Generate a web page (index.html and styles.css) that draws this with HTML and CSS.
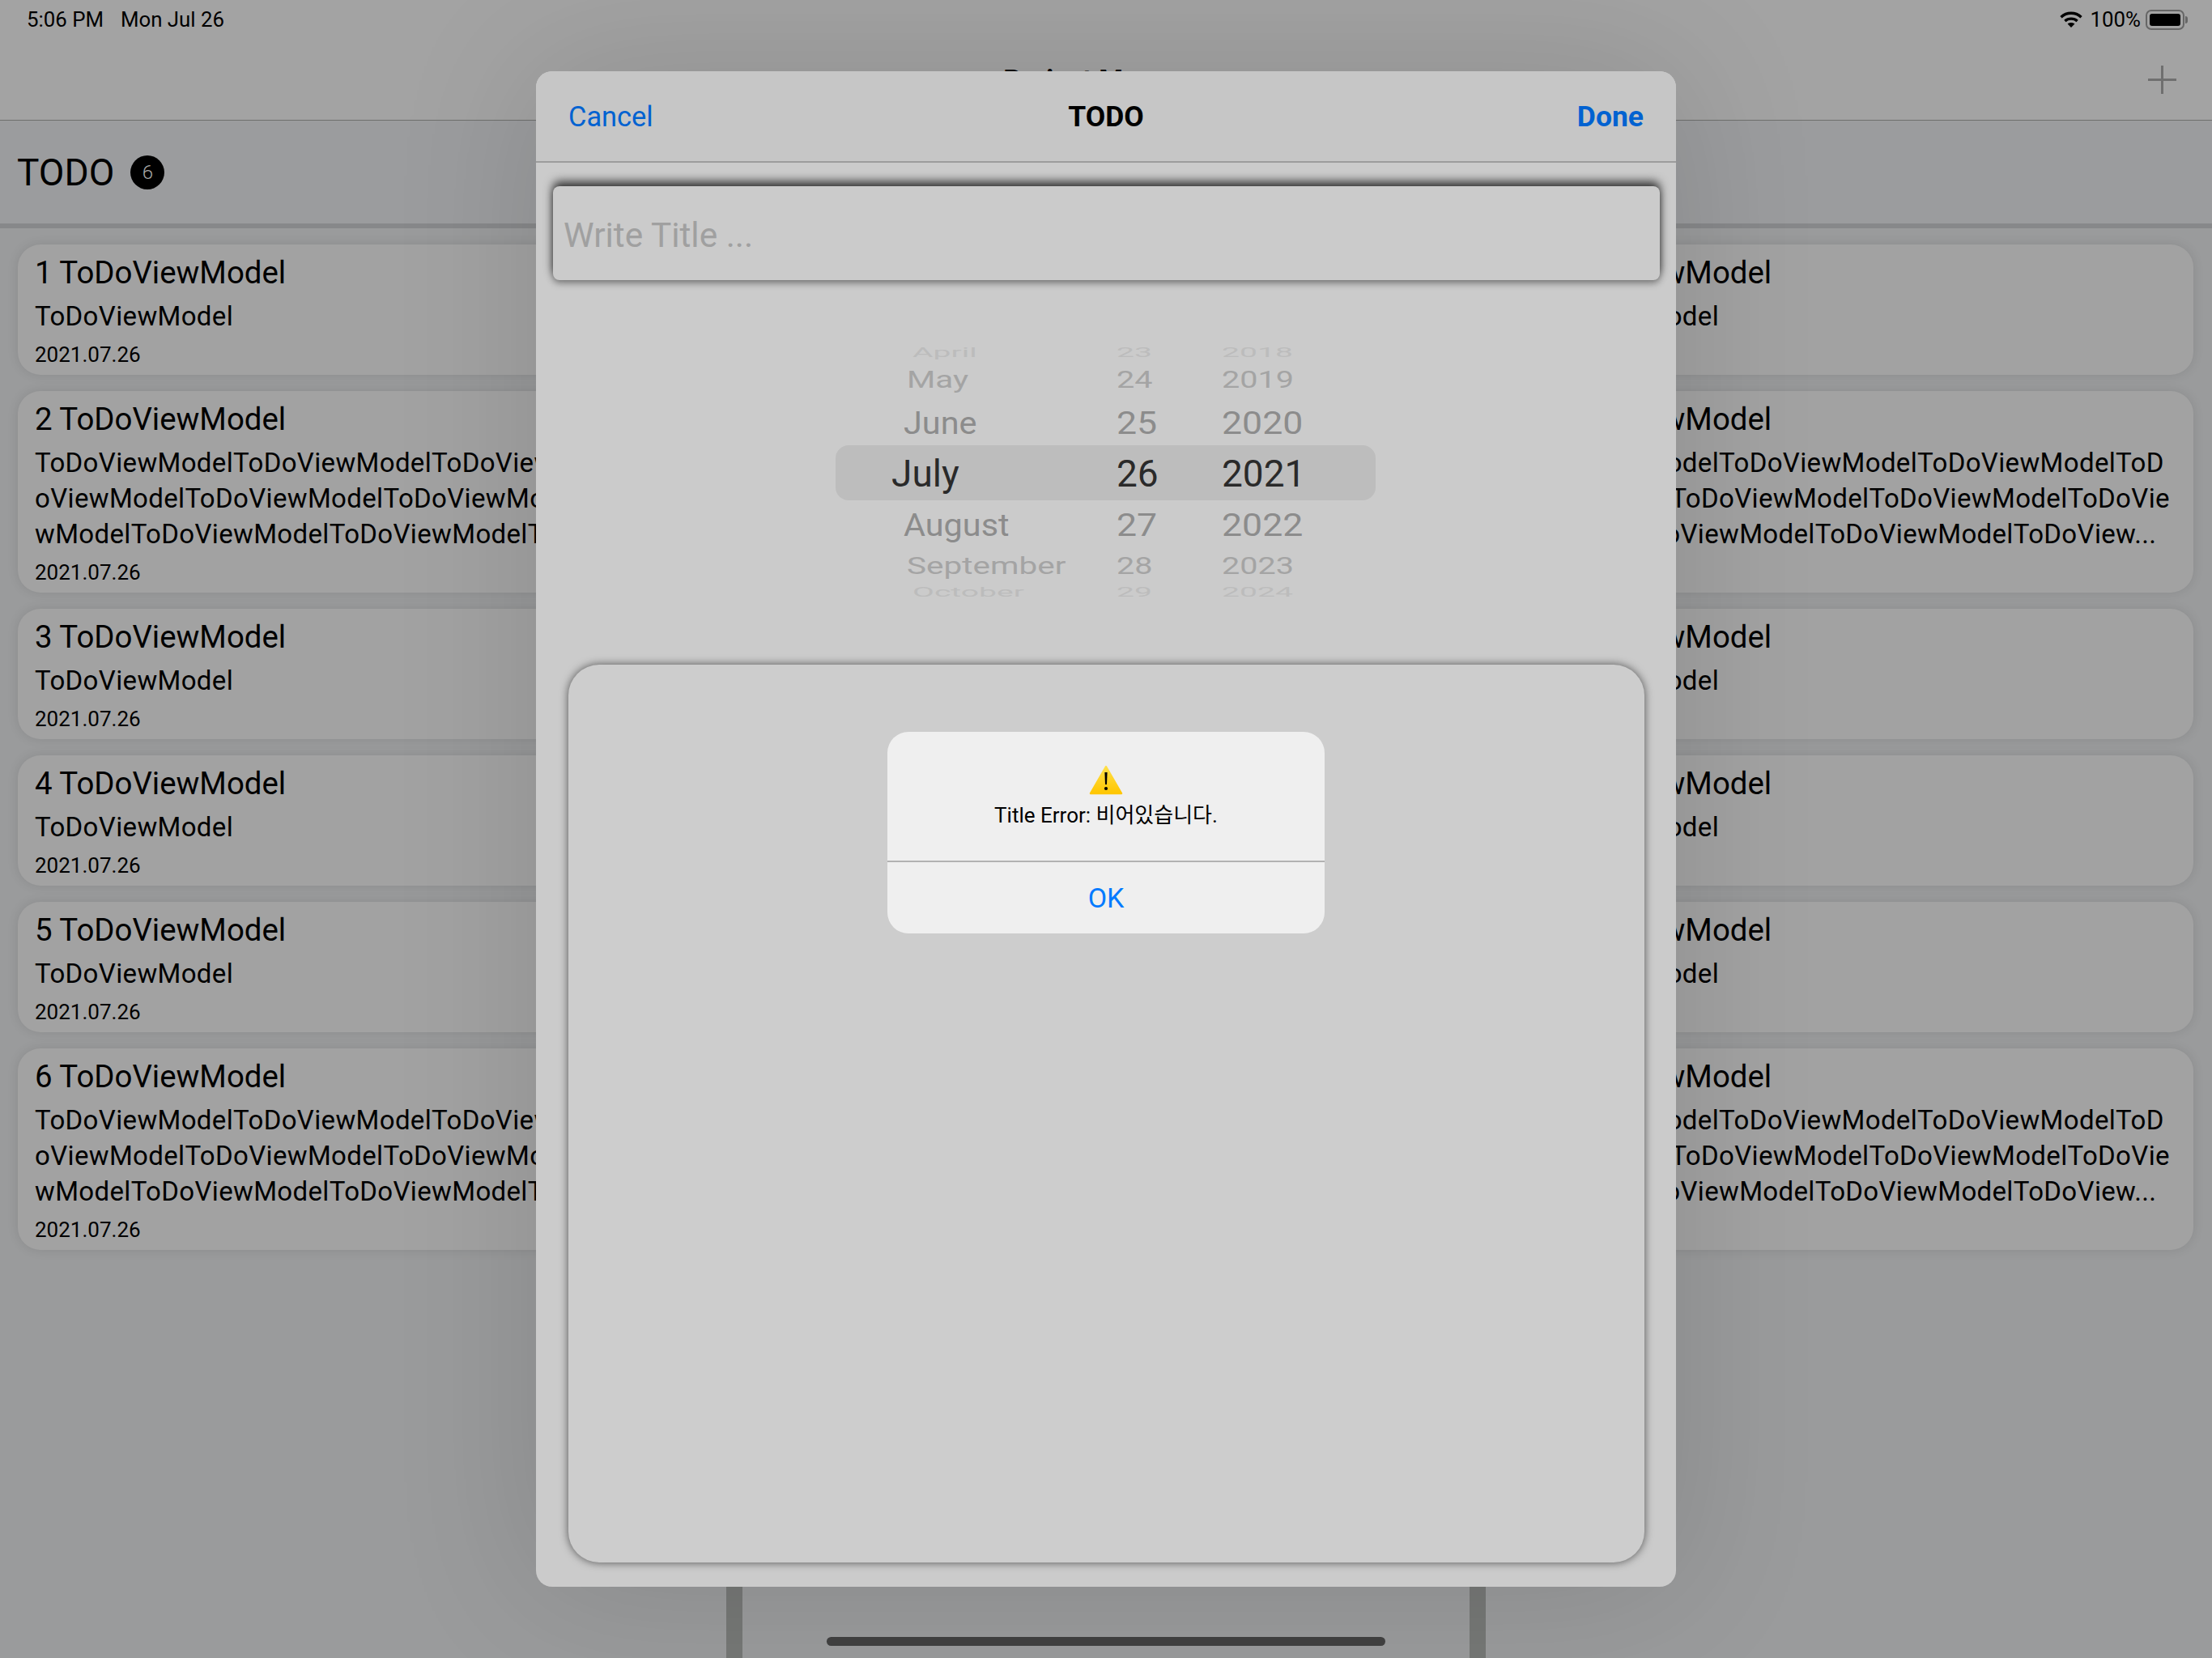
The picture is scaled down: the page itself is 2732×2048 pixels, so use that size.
FILE: index.html
```html
<!DOCTYPE html>
<html lang="en">
<head>
    <meta charset="UTF-8">
    <meta name="viewport" content="width=device-width, initial-scale=1.0">
    <title>Project Manager</title>
    <link rel="stylesheet" href="styles.css">
</head>
<body>
    <div class="app">
        <div class="status-bar">
            <div class="status-left">
                <span>5:06 PM</span>
                <span>Mon Jul 26</span>
            </div>
            <div class="status-right">
                <svg class="wifi" width="28" height="20" viewBox="0 0 28 20">
                    <path d="M1.5 7.2C8.5 .6 19.5 .6 26.5 7.2" fill="none" stroke="#000" stroke-width="3.4"/>
                    <path d="M6.4 12C10.6 8.2 17.4 8.2 21.6 12" fill="none" stroke="#000" stroke-width="3.4"/>
                    <path d="M14 20L9.6 15.4C12 13.4 16 13.4 18.4 15.4Z" fill="#000"/>
                </svg>
                <span>100%</span>
                <div class="battery">
                    <div class="battery-fill"></div>
                </div>
                <div class="battery-nub"></div>
            </div>
        </div>

        <div class="nav">
            <span></span>
            <div class="nav-title">Project Manager</div>
            <svg class="nav-add" width="35" height="35" viewBox="0 0 35 35">
                <path d="M17.5 0V35M0 17.5H35" stroke="#6f6f6f" stroke-width="3"/>
            </svg>
        </div>

        <div class="board">
            <div class="column">
                <div class="board-header">
                    <span class="board-title">TODO</span>
                    <span class="board-count">6</span>
                </div>
                <div class="card-list">
                    <div class="card">
                        <div class="card-title">1 ToDoViewModel</div>
                        <div class="card-line">ToDoViewModel</div>
                        <div class="card-date">2021.07.26</div>
                    </div>
                    <div class="card">
                        <div class="card-title">2 ToDoViewModel</div>
                        <div class="card-line">ToDoViewModelToDoViewModelToDoViewModelToD</div>
                        <div class="card-line">oViewModelToDoViewModelToDoViewModelToDoVie</div>
                        <div class="card-line">wModelToDoViewModelToDoViewModelToDoView...</div>
                        <div class="card-date">2021.07.26</div>
                    </div>
                    <div class="card">
                        <div class="card-title">3 ToDoViewModel</div>
                        <div class="card-line">ToDoViewModel</div>
                        <div class="card-date">2021.07.26</div>
                    </div>
                    <div class="card">
                        <div class="card-title">4 ToDoViewModel</div>
                        <div class="card-line">ToDoViewModel</div>
                        <div class="card-date">2021.07.26</div>
                    </div>
                    <div class="card">
                        <div class="card-title">5 ToDoViewModel</div>
                        <div class="card-line">ToDoViewModel</div>
                        <div class="card-date">2021.07.26</div>
                    </div>
                    <div class="card">
                        <div class="card-title">6 ToDoViewModel</div>
                        <div class="card-line">ToDoViewModelToDoViewModelToDoViewModelToD</div>
                        <div class="card-line">oViewModelToDoViewModelToDoViewModelToDoVie</div>
                        <div class="card-line">wModelToDoViewModelToDoViewModelToDoView...</div>
                        <div class="card-date">2021.07.26</div>
                    </div>
                </div>
            </div>

            <div class="column">
                <div class="board-header"></div>
            </div>

            <div class="column">
                <div class="board-header"></div>
                <div class="card-list">
                    <div class="card">
                        <div class="card-title">1 ToDoViewModel</div>
                        <div class="card-line">ToDoViewModel</div>
                        <div class="card-date">2021.07.26</div>
                    </div>
                    <div class="card">
                        <div class="card-title">2 ToDoViewModel</div>
                        <div class="card-line">ToDoViewModelToDoViewModelToDoViewModelToD</div>
                        <div class="card-line">oViewModelToDoViewModelToDoViewModelToDoVie</div>
                        <div class="card-line">wModelToDoViewModelToDoViewModelToDoView...</div>
                        <div class="card-date">2021.07.26</div>
                    </div>
                    <div class="card">
                        <div class="card-title">3 ToDoViewModel</div>
                        <div class="card-line">ToDoViewModel</div>
                        <div class="card-date">2021.07.26</div>
                    </div>
                    <div class="card">
                        <div class="card-title">4 ToDoViewModel</div>
                        <div class="card-line">ToDoViewModel</div>
                        <div class="card-date">2021.07.26</div>
                    </div>
                    <div class="card">
                        <div class="card-title">5 ToDoViewModel</div>
                        <div class="card-line">ToDoViewModel</div>
                        <div class="card-date">2021.07.26</div>
                    </div>
                    <div class="card">
                        <div class="card-title">6 ToDoViewModel</div>
                        <div class="card-line">ToDoViewModelToDoViewModelToDoViewModelToD</div>
                        <div class="card-line">oViewModelToDoViewModelToDoViewModelToDoVie</div>
                        <div class="card-line">wModelToDoViewModelToDoViewModelToDoView...</div>
                        <div class="card-date">2021.07.26</div>
                    </div>
                </div>
            </div>
        </div>
    </div>

    <div class="home-indicator"></div>

    <div class="modal">
        <div class="modal-nav">
            <span class="modal-cancel">Cancel</span>
            <span class="modal-title">TODO</span>
            <span class="modal-done">Done</span>
        </div>

        <div class="title-field">Write Title ...</div>

        <div class="picker">
            <div class="picker-band"></div>
            <div class="picker-grid">
                <span class="cell month r3">April</span><span class="cell day r3">23</span><span class="cell year r3">2018</span>
                <span class="cell month r2">May</span><span class="cell day r2">24</span><span class="cell year r2">2019</span>
                <span class="cell month r1">June</span><span class="cell day r1">25</span><span class="cell year r1">2020</span>
                <span class="cell month r0">July</span><span class="cell day r0">26</span><span class="cell year r0">2021</span>
                <span class="cell month r1">August</span><span class="cell day r1">27</span><span class="cell year r1">2022</span>
                <span class="cell month r2">September</span><span class="cell day r2">28</span><span class="cell year r2">2023</span>
                <span class="cell month r3">October</span><span class="cell day r3">29</span><span class="cell year r3">2024</span>
            </div>
        </div>

        <div class="panel"></div>
    </div>

    <div class="alert">
        <div class="alert-body">
            <svg class="alert-icon" width="42" height="37" viewBox="0 0 42 37">
                <defs>
                    <linearGradient id="warn" x1="0" y1="0" x2="0" y2="1">
                        <stop offset="0" stop-color="#ffe04a"/>
                        <stop offset="1" stop-color="#ffc600"/>
                    </linearGradient>
                </defs>
                <path d="M21 2L40 35H2Z" fill="url(#warn)" stroke="url(#warn)" stroke-width="2.5" stroke-linejoin="round"/>
                <path d="M19.4 9H22.6L22 24H20Z" fill="#000"/>
                <circle cx="21" cy="29" r="2.1" fill="#000"/>
            </svg>
            <div class="alert-text">Title Error: 비어있습니다.</div>
        </div>
        <div class="alert-ok">OK</div>
    </div>
</body>
</html>
```

FILE: styles.css
```css
* {
    box-sizing: border-box;
}

body {
    margin: 0;
    width: 2732px;
    height: 2048px;
    position: relative;
    overflow: hidden;
    background-color: #9a9b9c;
    font-family: Roboto, "Noto Sans CJK KR", sans-serif;
    color: #000;
}

.app {
    display: flex;
    flex-direction: column;
    height: 2048px;
}

/* status bar */
.status-bar {
    display: flex;
    justify-content: space-between;
    align-items: center;
    height: 48px;
    padding: 0 30px 0 33px;
    background-color: #a3a3a3;
    font-size: 25.8px;
}

.status-left {
    display: flex;
    gap: 21px;
}

.status-right {
    display: flex;
    align-items: center;
}

.wifi {
    margin-right: 10px;
}

.battery {
    width: 48px;
    height: 25px;
    margin-left: 6px;
    padding: 3px;
    border: 2px solid #666;
    border-radius: 7px;
}

.battery-fill {
    height: 100%;
    border-radius: 3px;
    background-color: #000;
}

.battery-nub {
    width: 3px;
    height: 9px;
    margin-left: 1px;
    border-radius: 0 3px 3px 0;
    background-color: #666;
}

/* nav */
.nav {
    display: grid;
    grid-template-columns: 1fr auto 1fr;
    align-items: center;
    height: 101px;
    padding: 0 44px;
    background-color: #a3a3a3;
    border-bottom: 1px solid #6f706e;
}

.nav-title {
    font-size: 34px;
    font-weight: 700;
}

.nav-add {
    justify-self: end;
}

/* board */
.board {
    flex: 1;
    display: grid;
    grid-template-columns: 897px 918px 917px;
}

.column + .column {
    border-left: 20px solid #767876;
}

.board-header {
    display: flex;
    align-items: center;
    gap: 20px;
    height: 133px;
    padding-left: 21px;
    background-color: #9b9c9e;
    border-bottom: 6px solid #87888a;
}

.board-title {
    font-size: 46px;
}

.board-count {
    display: flex;
    align-items: center;
    justify-content: center;
    width: 42px;
    height: 42px;
    border-radius: 50%;
    background-color: #000;
    color: #a8a8a8;
    font-size: 24px;
    font-weight: 300;
}

.card-list {
    display: flex;
    flex-direction: column;
    gap: 20px;
    padding: 20px 23px 0 22px;
}

.card {
    padding: 15px 21px 10px;
    border-radius: 28px;
    background-color: #a2a2a2;
    box-shadow: 0 0 14px rgba(0, 0, 0, 0.1);
}

.card-title {
    height: 40px;
    margin-bottom: 12px;
    font-size: 38.4px;
    line-height: 40px;
}

.card-line {
    height: 44px;
    font-size: 33px;
    letter-spacing: 0.35px;
    line-height: 44px;
    white-space: nowrap;
}

.card-date {
    height: 30px;
    margin-top: 10px;
    font-size: 26px;
    line-height: 30px;
}

.home-indicator {
    position: absolute;
    left: 1021px;
    top: 2022px;
    width: 690px;
    height: 11px;
    border-radius: 6px;
    background-color: #414141;
}

/* modal sheet */
.modal {
    position: absolute;
    left: 662px;
    top: 88px;
    width: 1408px;
    height: 1872px;
    display: flex;
    flex-direction: column;
    border-radius: 20px;
    background-color: #cbcbcb;
    box-shadow: 0 0 180px rgba(0, 0, 0, 0.13);
}

.modal-nav {
    display: grid;
    grid-template-columns: 1fr auto 1fr;
    align-items: center;
    height: 113px;
    padding: 0 40px;
    border-radius: 20px 20px 0 0;
    border-bottom: 2px solid #9d9d9d;
    background-color: #c6c6c6;
    font-size: 34.4px;
    color: #0062d1;
}

.modal-title {
    font-size: 35.5px;
    font-weight: 700;
    color: #000;
}

.modal-done {
    justify-self: end;
    font-size: 35.5px;
    font-weight: 700;
}

.title-field {
    height: 116px;
    margin: 29px 20px 0 21px;
    padding-left: 13px;
    border-radius: 8px;
    background-color: #cbcbcb;
    box-shadow: 0 -6px 12px rgba(0, 0, 0, 0.72), 0 4px 8px rgba(0, 0, 0, 0.35);
    font-size: 42.4px;
    line-height: 121px;
    color: #a0a0a0;
}

.picker {
    position: relative;
    height: 322px;
    margin-top: 78px;
}

.picker-band {
    position: absolute;
    left: 370px;
    top: 126px;
    width: 667px;
    height: 68px;
    border-radius: 16px;
    background-color: #bdbdbd;
}

.picker-grid {
    position: relative;
    display: grid;
    grid-template-columns: 278px 130px 200px;
    grid-template-rows: 24px 42px 64px 62px 64px 38px 28px;
    margin-left: 439px;
}

.cell {
    font-size: 46px;
    transform-origin: left center;
    align-self: center;
    justify-self: start;
    line-height: 1;
}

.r0 {
    color: #2a2a2a;
}

.r1 {
    color: #8c8c8c;
    transform: scale(0.97, 0.85);
}

.r2 {
    color: #a4a4a4;
    transform: scale(0.86, 0.63);
}

.r3 {
    color: #bcbcbc;
    transform: scale(0.85, 0.34);
}

.month.r1 {
    margin-left: 15px;
    transform: scale(0.9, 0.85);
}

.month.r2 {
    margin-left: 19px;
    transform: scale(0.88, 0.63);
}

.month.r3 {
    margin-left: 26px;
}

.panel {
    flex: 1;
    margin: 75px 39px 30px 40px;
    border-radius: 38px;
    background-color: #cdcdcd;
    box-shadow: 0 0 11px rgba(0, 0, 0, 0.6);
}

/* alert */
.alert {
    position: absolute;
    left: 1096px;
    top: 904px;
    width: 540px;
    height: 249px;
    display: flex;
    flex-direction: column;
    border-radius: 26px;
    background-color: #efefef;
}

.alert-body {
    display: flex;
    flex-direction: column;
    align-items: center;
    height: 161px;
    padding-top: 41px;
    border-bottom: 2px solid #b2b2b2;
}

.alert-text {
    margin-top: 4px;
    font-size: 26px;
}

.alert-ok {
    flex: 1;
    display: flex;
    align-items: center;
    justify-content: center;
    font-size: 34px;
    color: #007aff;
}
```
